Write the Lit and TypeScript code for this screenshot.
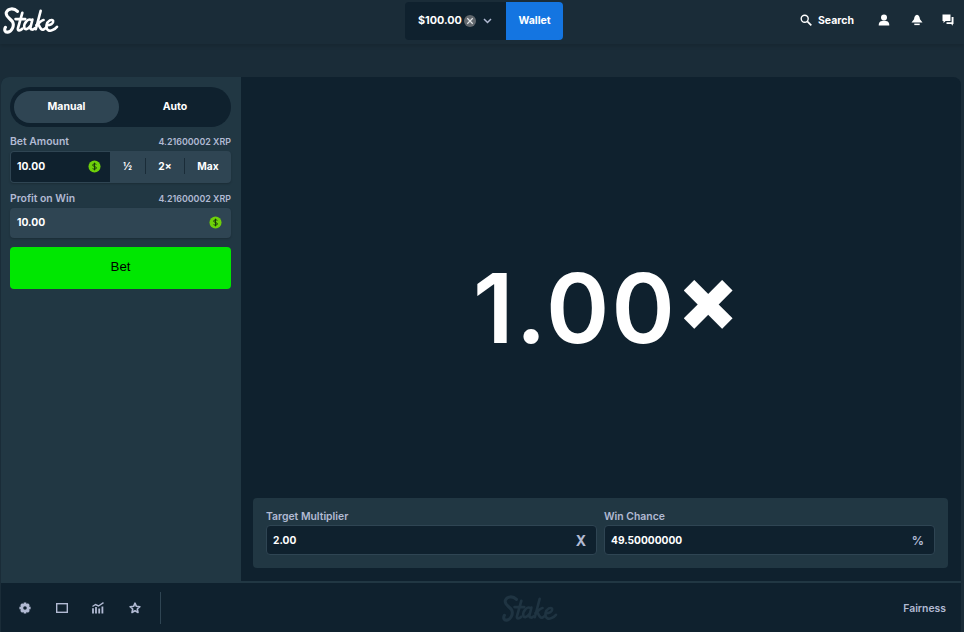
import { LitElement, html, css, svg } from "lit";
import { customElement } from "lit/decorators.js";

const logoStrokes = svg`
  <path d="M15 5.5C11 1.5 5 2.5 3.5 6.5C2 11 8 13 10 16.5C12 20.5 9 26.5 5 27C2 27.5 1 24.5 2.5 22" fill="none" stroke="currentColor" stroke-width="3.2" stroke-linecap="round"/>
  <path d="M20 7L15.5 23C15 26 17.5 26 20 23.5M13 13.5H23" fill="none" stroke="currentColor" stroke-width="2.8" stroke-linecap="round"/>
  <path d="M29.5 14.5C26 12.5 21.5 17.5 22 22C22.5 25.5 26 24 29 20M30.5 14L28.5 22C28.3 25 31 25 33 23" fill="none" stroke="currentColor" stroke-width="2.7" stroke-linecap="round"/>
  <path d="M39 5L34 24M34.5 20C37 18 40 14.5 42 14.5M37 19.5C38 22 39 25 41.5 24.5C43 24 44 23 45 22" fill="none" stroke="currentColor" stroke-width="2.7" stroke-linecap="round"/>
  <path d="M45.5 20C49 20 52.5 18 52 15.5C51 13 46 15 45 20C44.5 25 48 26.5 51 25C53.5 24 55 23 56 21.5" fill="none" stroke="currentColor" stroke-width="2.6" stroke-linecap="round"/>
`;

const coin = html`<svg class="coin" viewBox="0 0 14 14" aria-hidden="true">
  <circle cx="7" cy="7" r="6.5" fill="#6ed00a"></circle>
  <path d="M9 4.7C8.3 4 5 3.8 5 5.5C5 7.4 9.1 6.6 9.1 8.6C9.1 10.2 5.7 10 4.9 9.3M7 2.9V11.1" fill="none" stroke="#15330a" stroke-width="1"></path>
</svg>`;

@customElement("app-root")
export class AppRoot extends LitElement {
  static styles = css`
    :host { display: block; width: 964px; height: 632px; overflow: hidden; background: #1a2c38; color: #fff;
      font-family: Inter, "Liberation Sans", sans-serif; font-size: 11px; font-weight: 600; }
    svg { display: block; }
    .header { height: 44px; box-sizing: border-box; display: grid; grid-template-columns: 1fr auto 1fr; align-items: start;
      background: #1a2c38; box-shadow: 0 2px 4px rgba(0,0,0,.14); position: relative; }
    .logo { width: 56px; height: 30px; margin: 6px 0 0 3px; color: #fff; }
    .wallet { display: flex; height: 38px; margin: 2px 0 0 4px; }
    .balance { width: 101px; box-sizing: border-box; padding: 0 0 1px 13px; display: flex; align-items: center; background: #0f212e; border-radius: 4px 0 0 4px; }
    .amount { font-size: 10.8px; font-weight: 700; }
    .xrp { width: 12px; height: 12px; margin-left: 2px; }
    .chev { width: 9px; height: 6px; margin-left: 7px; }
    .wallet-btn { width: 57px; padding-bottom: 1px; box-sizing: border-box; display: flex; align-items: center; justify-content: center; background: #1475e1; border-radius: 0 4px 4px 0; font-weight: 700; font-size: 10.5px; }
    .actions { display: flex; align-items: center; justify-content: flex-end; height: 40px; padding-right: 10px; }
    .search { display: flex; align-items: center; gap: 6px; margin-right: 24px; font-size: 10.5px; font-weight: 700; }
    .actions svg { width: 12px; height: 12px; }
    .actions .bell { margin-left: 21px; }
    .actions .chat { margin-left: 19px; }
    .spacer { height: 33px; }
    .panel { margin: 0 3px 0 1px; height: 555px; background: #0f212e; border-radius: 8px 8px 0 0; overflow: hidden; display: flex; flex-direction: column; }
    .main { flex: 1; display: flex; min-height: 0; }
    .side { width: 240px; flex: none; box-sizing: border-box; padding: 10px 10px 0 9px; background: #213743; display: flex; flex-direction: column; }
    .toggle { height: 40px; box-sizing: border-box; padding: 4px; display: flex; background: #0f212e; border-radius: 20px; }
    .toggle div { display: flex; align-items: center; justify-content: center; border-radius: 16px; font-weight: 700; font-size: 10.5px; padding-bottom: 2px; box-sizing: border-box; }
    .toggle .on { width: 105px; background: #2f4553; }
    .toggle .off { flex: 1; padding-left: 4px; }
    .lab { display: flex; justify-content: space-between; align-items: center; height: 14px; color: #b1bad3; font-size: 10.4px; font-weight: 600; }
    .lab .r { font-size: 8.9px; }
    .lab.first { margin-top: 7px; }
    .lab.second { margin-top: 8px; }
    .betrow { margin-top: 3px; height: 32px; display: flex; background: #2f4553; border-radius: 4px; box-shadow: 0 1px 2px rgba(0,0,0,.2); }
    .betin { width: 99px; box-sizing: border-box; margin: 1px 0 1px 1px; padding: 0 9px 2px 6px; display: flex; align-items: center; justify-content: space-between; background: #0f212e; border-radius: 3px 0 0 3px; font-weight: 700; font-size: 10.3px; }
    .coin { width: 13px; height: 13px; }
    .opts { flex: 1; display: grid; grid-template-columns: 35px 39px 1fr; align-items: center; font-weight: 700; font-size: 10.2px; padding-bottom: 2px; }
    .opts span { text-align: center; line-height: 16px; }
    .opts span + span { border-left: 1px solid #1a2c38; }
    .profit { margin-top: 3px; height: 30px; box-sizing: border-box; padding: 0 9px 2px 7px; display: flex; align-items: center; justify-content: space-between; background: #2f4553; border-radius: 4px; font-weight: 700; font-size: 10.3px; box-shadow: 0 1px 2px rgba(0,0,0,.2); }
    .bet { margin-top: 9px; height: 42px; box-sizing: border-box; padding-bottom: 3px; display: flex; align-items: center; justify-content: center; background: #00e701; color: #000; border-radius: 4px; font: 400 13.3px "Liberation Sans", Arial, sans-serif; }
    .game { flex: 1; min-width: 0; display: flex; flex-direction: column; padding: 0 13px 13px 12px; }
    .multi { flex: 1; display: flex; align-items: center; justify-content: center; padding-top: 40px; font-size: 96px; line-height: 1; font-weight: 600; letter-spacing: 2.2px; }
    .multi .x { display: inline-block; width: 50px; margin: 0 0 18px 1px; font-size: 87px; font-weight: 900; letter-spacing: 0; }
    .params { height: 70px; box-sizing: border-box; padding: 12px 13px 0; display: grid; grid-template-columns: 1fr 1fr; gap: 7px; background: #213743; border-radius: 4px; }
    .param .t { height: 14px; line-height: 14px; color: #b1bad3; font-size: 10.4px; font-weight: 600; }
    .field { margin-top: 1px; height: 30px; box-sizing: border-box; padding: 0 10px 0 6px; display: flex; align-items: center; justify-content: space-between; background: #0f212e; border: 1px solid #2f4553; border-radius: 4px; font-weight: 700; font-size: 10.2px; }
    .field .u { color: #b1bad3; font-size: 14px; font-weight: 700; }
    .field .pct { font-size: 12px; }
    .foot { height: 51px; flex: none; box-sizing: border-box; border-top: 2px solid #213743; background: #0f212e; display: flex; align-items: center; position: relative; padding: 0 15px 0 18px; }
    .foot .icons { display: flex; align-items: center; gap: 24.7px; color: #b1bad3; }
    .foot .icons svg { width: 12px; height: 12px; }
    .divider { width: 1px; height: 32px; background: #2f4553; margin-left: 19px; }
    .wm { position: absolute; left: 501px; top: 11px; width: 56px; height: 30px; color: #1f3442; }
    .fair { margin-left: auto; padding-top: 1px; color: #b1bad3; font-size: 10.4px; font-weight: 600; }
  `;

  render() {
    return html`
      <div class="header">
        <svg class="logo" viewBox="0 0 58 31">${logoStrokes}</svg>
        <div class="wallet">
          <div class="balance">
            <span class="amount">$100.00</span>
            <svg class="xrp" viewBox="0 0 11 11"><circle cx="5.5" cy="5.5" r="5.5" fill="#62686e"></circle><path d="M3 3l5 5M8 3l-5 5" stroke="#e4e6e8" stroke-width="1.1"></path></svg>
            <svg class="chev" viewBox="0 0 9 6"><path d="M1 1l3.5 3.5L8 1" fill="none" stroke="#b1bad3" stroke-width="1.5"></path></svg>
          </div>
          <div class="wallet-btn">Wallet</div>
        </div>
        <div class="actions">
          <div class="search">
            <svg viewBox="0 0 12 12"><circle cx="4.7" cy="4.7" r="3.5" fill="none" stroke="#fff" stroke-width="1.4"></circle><path d="M7.3 7.3L11.3 11.3" stroke="#fff" stroke-width="1.7"></path></svg>
            <span>Search</span>
          </div>
          <svg viewBox="0 0 12 12"><circle cx="6" cy="3.4" r="3" fill="#fff"></circle><path d="M.7 11.5C.7 7.5 3 6.8 6 6.8S11.3 7.5 11.3 11.5Z" fill="#fff"></path></svg>
          <svg class="bell" viewBox="0 0 12 12"><path d="M6 .8C8 .8 8.6 3 9 5.2L11.5 8.4H.5L3 5.2C3.4 3 4 .8 6 .8Z" fill="#fff"></path><rect x="3.3" y="9.6" width="5.4" height="1.5" fill="#fff"></rect></svg>
          <svg class="chat" viewBox="0 0 12 12"><path d="M.5.5H8.5V7H3.6L1.5 9V7H.5Z" fill="#fff"></path><path d="M9.6 3H11.5V10H10.8V11.7L9.2 10H4.5V8.2H9.6Z" fill="#fff"></path></svg>
        </div>
      </div>
      <div class="spacer"></div>
      <div class="panel">
        <div class="main">
          <div class="side">
            <div class="toggle"><div class="on">Manual</div><div class="off">Auto</div></div>
            <div class="lab first"><span>Bet Amount</span><span class="r">4.21600002 XRP</span></div>
            <div class="betrow">
              <div class="betin"><span>10.00</span>${coin}</div>
              <div class="opts"><span>½</span><span>2×</span><span>Max</span></div>
            </div>
            <div class="lab second"><span>Profit on Win</span><span class="r">4.21600002 XRP</span></div>
            <div class="profit"><span>10.00</span>${coin}</div>
            <div class="bet">Bet</div>
          </div>
          <div class="game">
            <div class="multi"><span>1.00</span><span class="x">×</span></div>
            <div class="params">
              <div class="param"><div class="t">Target Multiplier</div><div class="field"><span>2.00</span><span class="u">X</span></div></div>
              <div class="param"><div class="t">Win Chance</div><div class="field"><span>49.50000000</span><span class="u pct">%</span></div></div>
            </div>
          </div>
        </div>
        <div class="foot">
          <div class="icons">
            <svg viewBox="0 0 12 12"><path fill-rule="evenodd" d="M4.8.4H7.2L7.6 2L9 1.3L10.7 3L10 4.4L11.6 4.8V7.2L10 7.6L10.7 9L9 10.7L7.6 10L7.2 11.6H4.8L4.4 10L3 10.7L1.3 9L2 7.6L.4 7.2V4.8L2 4.4L1.3 3L3 1.3L4.4 2ZM6 4.2A1.8 1.8 0 1 0 6 7.8A1.8 1.8 0 1 0 6 4.2Z" fill="currentColor"></path></svg>
            <svg viewBox="0 0 12 12"><rect x=".7" y="1.7" width="10.6" height="8.6" fill="none" stroke="currentColor" stroke-width="1.4"></rect></svg>
            <svg viewBox="0 0 12 12"><path d="M.5 4.5L3.5 2.5L6.5 4L11.5.7" fill="none" stroke="currentColor" stroke-width="1.4"></path><path d="M1 6.2V11.5M4 5V11.5M7.2 6.5V11.5M10.4 4.5V11.5" stroke="currentColor" stroke-width="1.8"></path></svg>
            <svg viewBox="0 0 12 12"><path d="M6 1.2L7.4 4.3L10.9 4.7L8.3 7L9 10.5L6 8.8L3 10.5L3.7 7L1.1 4.7L4.6 4.3Z" fill="none" stroke="currentColor" stroke-width="1.6" stroke-linejoin="round"></path></svg>
          </div>
          <div class="divider"></div>
          <svg class="wm" viewBox="0 0 58 31">${logoStrokes}</svg>
          <div class="fair">Fairness</div>
        </div>
      </div>
    `;
  }
}
